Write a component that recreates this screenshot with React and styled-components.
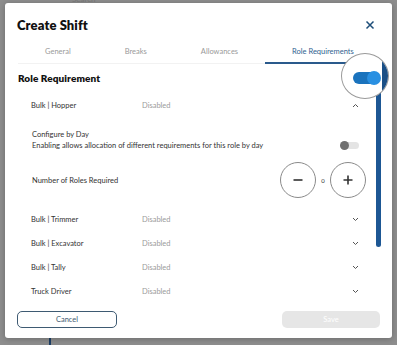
import React from 'react'
import styled, { createGlobalStyle } from 'styled-components'

const GlobalStyle = createGlobalStyle`
  html, body {
    margin: 0;
    padding: 0;
    background: #8e8e8e;
    font-family: Lato, 'Open Sans', 'Liberation Sans', sans-serif;
    color: #222;
  }
`

const Page = styled.div`
  position: relative;
  width: 397px;
  height: 345px;
  overflow: hidden;
  padding: 3px 5px 0;
  box-sizing: border-box;
`

// blurred app behind the overlay
const BehindSearch = styled.div`
  position: absolute;
  top: -5px;
  left: 72px;
  font-size: 8px;
  line-height: 8px;
  color: #7a7a7a;
`

const BehindLine = styled.div`
  position: absolute;
  left: 49px;
  top: 338px;
  width: 2px;
  height: 10px;
  background: #1c3f66;
`

const Modal = styled.div`
  position: relative;
  width: 387px;
  height: 335px;
  background: #fff;
  border-radius: 3px;
  box-shadow: 0 1px 6px rgba(0, 0, 0, 0.25);
  display: flex;
  flex-direction: column;
  box-sizing: border-box;
  padding-top: 12px;
`

const Header = styled.div`
  display: flex;
  align-items: center;
  justify-content: space-between;
  padding: 0 17px 0 12px;
  height: 20px;
`

const Title = styled.h1`
  margin: 0;
  font-size: 13px;
  font-weight: 800;
  letter-spacing: 0.1px;
  color: #111;
`

const CloseButton = styled.button`
  border: 0;
  background: none;
  padding: 0;
  width: 10px;
  height: 10px;
  display: flex;
  color: #1e4e79;
`

const Tabs = styled.div`
  display: flex;
  margin: 7px 11px 0 13px;
  border-bottom: 1px solid #f2f2f2;
`

const Tab = styled.div`
  padding: 5px 27px 5px;
  font-size: 7.5px;
  line-height: 10px;
  white-space: nowrap;
  color: ${({ active }) => (active ? '#2f5f8f' : '#9a9a9a')};
  border-bottom: 2px solid ${({ active }) => (active ? '#2a5a8c' : 'transparent')};
  margin-bottom: -1px;
`

const Body = styled.div`
  flex: 1;
  display: grid;
  grid-template-columns: 1fr 5px;
  column-gap: 6px;
  padding: 0 11px 0 13px;
  overflow: hidden;
  min-height: 0;
`

const Content = styled.div`
  overflow: hidden;
`

const ScrollThumb = styled.div`
  height: 183px;
  background: #1d5794;
  border-radius: 0 0 3px 3px;
`

const SectionTitle = styled.h2`
  margin: 8px 0 9px;
  font-size: 10px;
  line-height: 12px;
  font-weight: 800;
  letter-spacing: 0.1px;
  color: #111;
`

const Row = styled.div`
  display: flex;
  align-items: center;
  height: 24px;
  padding-left: 13px;
  padding-right: 11px;
  font-size: 7.5px;
`

const RoleName = styled.span`
  width: 111px;
  color: #333;
`

const Status = styled.span`
  flex: 1;
  color: #9b9b9b;
`

const Panel = styled.div`
  padding: 12px 4px 9px 14px;
  display: flex;
  flex-direction: column;
  gap: 11px;
`

const PanelLine = styled.div`
  display: flex;
  align-items: center;
  justify-content: space-between;
  font-size: 7.5px;
  color: #333;
`

const Text = styled.div`
  line-height: 11px;
`

const SmallToggle = styled.div`
  position: relative;
  width: 18px;
  height: 7px;
  border-radius: 4px;
  background: #e4e4e4;
  margin-top: 10px;
  margin-right: 7px;
  &::after {
    content: '';
    position: absolute;
    left: -1px;
    top: -1px;
    width: 9px;
    height: 9px;
    border-radius: 50%;
    background: #707070;
  }
`

const Stepper = styled.div`
  display: flex;
  align-items: center;
  gap: 5px;
`

const RoundButton = styled.button`
  width: 36px;
  height: 36px;
  border-radius: 50%;
  border: 1px solid #8a8a8a;
  background: #fff;
  padding: 0;
  display: flex;
  align-items: center;
  justify-content: center;
`

const Count = styled.span`
  font-size: 6px;
  color: #333;
  width: 4px;
  text-align: center;
`

const Footer = styled.div`
  display: flex;
  justify-content: space-between;
  padding: 8px 12px 10px;
`

const Button = styled.button`
  width: ${({ w }) => w}px;
  height: 17px;
  border-radius: 5px;
  font-family: inherit;
  font-size: 7.5px;
  padding: 0;
  border: ${({ primary }) => (primary ? '0' : '1.5px solid #3e5a72')};
  background: ${({ primary }) => (primary ? '#e6e6e6' : '#fff')};
  color: ${({ primary }) => (primary ? '#fff' : '#3e5a72')};
`

// magnifier annotation over the switch
const Magnifier = styled.div`
  position: absolute;
  left: 336px;
  top: 50px;
  width: 48px;
  height: 46px;
  border-radius: 50%;
  border: 1px solid #9a9a9a;
  background: #fff;
  overflow: hidden;
  box-sizing: border-box;
`

const BigToggle = styled.div`
  position: absolute;
  left: 11px;
  top: 18px;
  width: 27px;
  height: 12px;
  border-radius: 6px;
  background: #1a73bd;
  &::after {
    content: '';
    position: absolute;
    right: -1px;
    top: -1px;
    width: 14px;
    height: 14px;
    border-radius: 50%;
    background: #2990e2;
  }
`

const BigThumb = styled.div`
  position: absolute;
  left: 40px;
  top: 0;
  width: 9px;
  height: 46px;
  background: #1a4f86;
`

const Chevron = ({ up }) => (
  <svg width="7" height="5" viewBox="0 0 7 5">
    <polyline
      points={up ? '1,4 3.5,1.5 6,4' : '1,1 3.5,3.5 6,1'}
      fill="none"
      stroke="#555"
      strokeWidth="1"
    />
  </svg>
)

const roles = ['Bulk | Trimmer', 'Bulk | Excavator', 'Bulk | Tally', 'Truck Driver']

export default function App() {
  return (
    <>
      <GlobalStyle />
      <Page>
        <BehindSearch>Search</BehindSearch>
        <BehindLine />
        <Modal>
          <Header>
            <Title>Create Shift</Title>
            <CloseButton aria-label="Close">
              <svg width="10" height="10" viewBox="0 0 10 10">
                <path d="M1.5 1.5L8.5 8.5M8.5 1.5L1.5 8.5" stroke="currentColor" strokeWidth="1.5" />
              </svg>
            </CloseButton>
          </Header>
          <Tabs>
            <Tab>General</Tab>
            <Tab>Breaks</Tab>
            <Tab>Allowances</Tab>
            <Tab active>Role Requirements</Tab>
          </Tabs>
          <Body>
            <Content>
              <SectionTitle>Role Requirement</SectionTitle>
              <Row>
                <RoleName>Bulk | Hopper</RoleName>
                <Status>Disabled</Status>
                <Chevron up />
              </Row>
              <Panel>
                <PanelLine>
                  <div>
                    <Text>Configure by Day</Text>
                    <Text>Enabling allows allocation of different requirements for this role by day</Text>
                  </div>
                  <SmallToggle />
                </PanelLine>
                <PanelLine>
                  <Text>Number of Roles Required</Text>
                  <Stepper>
                    <RoundButton aria-label="Decrease">
                      <svg width="10" height="10" viewBox="0 0 10 10">
                        <path d="M0.5 5H9.5" stroke="#333" strokeWidth="1.6" />
                      </svg>
                    </RoundButton>
                    <Count>0</Count>
                    <RoundButton aria-label="Increase">
                      <svg width="10" height="10" viewBox="0 0 10 10">
                        <path d="M0.5 5H9.5M5 0.5V9.5" stroke="#333" strokeWidth="1.6" />
                      </svg>
                    </RoundButton>
                  </Stepper>
                </PanelLine>
              </Panel>
              {roles.map((r) => (
                <Row key={r}>
                  <RoleName>{r}</RoleName>
                  <Status>Disabled</Status>
                  <Chevron />
                </Row>
              ))}
            </Content>
            <ScrollThumb />
          </Body>
          <Footer>
            <Button w={100}>Cancel</Button>
            <Button w={98} primary>
              Save
            </Button>
          </Footer>
          <Magnifier>
            <BigToggle />
            <BigThumb />
          </Magnifier>
        </Modal>
      </Page>
    </>
  )
}
